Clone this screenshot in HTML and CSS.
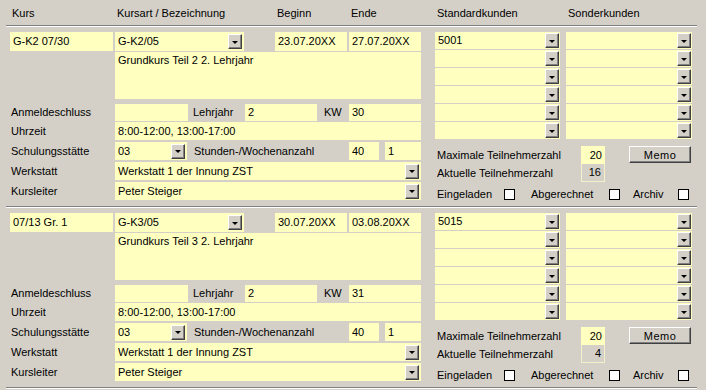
FILE: index.html
```html
<!DOCTYPE html>
<html lang="de">
<head>
    <meta charset="UTF-8">
    <title>Kursübersicht</title>
    <link rel="stylesheet" href="styles.css">
</head>
<body>
    <div class="head">
        <div class="left-cols">
            <span class="h">Kurs</span>
            <span class="h">Kursart / Bezeichnung</span>
            <span></span>
            <span class="h">Beginn</span>
            <span class="h">Ende</span>
        </div>
        <div class="right-cols">
            <span class="h">Standardkunden</span>
            <span class="h">Sonderkunden</span>
        </div>
    </div>
    <div class="sep"></div>

    <div class="block">
        <div class="left">
            <div class="left-cols top">
                <div class="field">G-K2 07/30</div>
                <div class="field combo"><span>G-K2/05</span><i class="drop"></i></div>
                <span></span>
                <div class="field">23.07.20XX</div>
                <div class="field">27.07.20XX</div>
            </div>
            <div class="line area-line">
                <span></span>
                <div class="field area">Grundkurs Teil 2 2. Lehrjahr</div>
            </div>
            <div class="line anm">
                <span class="lbl">Anmeldeschluss</span>
                <div class="sub">
                    <div class="field w73"></div>
                    <span class="cap w57">Lehrjahr</span>
                    <div class="field w72">2</div>
                    <span class="cap w32">KW</span>
                    <div class="field w72">30</div>
                </div>
            </div>
            <div class="line uhr">
                <span class="lbl">Uhrzeit</span>
                <div class="field">8:00-12:00, 13:00-17:00</div>
            </div>
            <div class="line">
                <span class="lbl">Schulungsstätte</span>
                <div class="sub">
                    <div class="field combo w72"><span>03</span><i class="drop"></i></div>
                    <span class="cap w162">Stunden-/Wochenanzahl</span>
                    <div class="field w30">40</div>
                    <span class="w6"></span>
                    <div class="field w36">1</div>
                </div>
            </div>
            <div class="line">
                <span class="lbl">Werkstatt</span>
                <div class="field combo"><span>Werkstatt 1 der Innung ZST</span><i class="drop"></i></div>
            </div>
            <div class="line">
                <span class="lbl">Kursleiter</span>
                <div class="field combo"><span>Peter Steiger</span><i class="drop"></i></div>
            </div>
        </div>
        <div class="right">
            <div class="right-cols kunden">
                <div class="field combo"><span>5001</span><i class="drop"></i></div>
                <div class="field combo"><span></span><i class="drop"></i></div>
                <div class="field combo"><span></span><i class="drop"></i></div>
                <div class="field combo"><span></span><i class="drop"></i></div>
                <div class="field combo"><span></span><i class="drop"></i></div>
                <div class="field combo"><span></span><i class="drop"></i></div>
                <div class="field combo"><span></span><i class="drop"></i></div>
                <div class="field combo"><span></span><i class="drop"></i></div>
                <div class="field combo"><span></span><i class="drop"></i></div>
                <div class="field combo"><span></span><i class="drop"></i></div>
                <div class="field combo"><span></span><i class="drop"></i></div>
                <div class="field combo"><span></span><i class="drop"></i></div>
            </div>
            <div class="stats">
                <span class="lbl">Maximale Teilnehmerzahl</span>
                <div class="field num">20</div>
                <span></span>
                <button class="memo">Memo</button>
                <span class="lbl">Aktuelle Teilnehmerzahl</span>
                <div class="num ro">16</div>
            </div>
            <div class="checks">
                <span class="ck w69">Eingeladen</span><i class="box"></i>
                <span class="ck w78 m16">Abgerechnet</span><i class="box"></i>
                <span class="ck w45 m13">Archiv</span><i class="box"></i>
            </div>
        </div>
    </div>
    <div class="sep"></div>

    <div class="block">
        <div class="left">
            <div class="left-cols top">
                <div class="field">07/13 Gr. 1</div>
                <div class="field combo"><span>G-K3/05</span><i class="drop"></i></div>
                <span></span>
                <div class="field">30.07.20XX</div>
                <div class="field">03.08.20XX</div>
            </div>
            <div class="line area-line">
                <span></span>
                <div class="field area">Grundkurs Teil 3 2. Lehrjahr</div>
            </div>
            <div class="line anm">
                <span class="lbl">Anmeldeschluss</span>
                <div class="sub">
                    <div class="field w73"></div>
                    <span class="cap w57">Lehrjahr</span>
                    <div class="field w72">2</div>
                    <span class="cap w32">KW</span>
                    <div class="field w72">31</div>
                </div>
            </div>
            <div class="line uhr">
                <span class="lbl">Uhrzeit</span>
                <div class="field">8:00-12:00, 13:00-17:00</div>
            </div>
            <div class="line">
                <span class="lbl">Schulungsstätte</span>
                <div class="sub">
                    <div class="field combo w72"><span>03</span><i class="drop"></i></div>
                    <span class="cap w162">Stunden-/Wochenanzahl</span>
                    <div class="field w30">40</div>
                    <span class="w6"></span>
                    <div class="field w36">1</div>
                </div>
            </div>
            <div class="line">
                <span class="lbl">Werkstatt</span>
                <div class="field combo"><span>Werkstatt 1 der Innung ZST</span><i class="drop"></i></div>
            </div>
            <div class="line">
                <span class="lbl">Kursleiter</span>
                <div class="field combo"><span>Peter Steiger</span><i class="drop"></i></div>
            </div>
        </div>
        <div class="right">
            <div class="right-cols kunden">
                <div class="field combo"><span>5015</span><i class="drop"></i></div>
                <div class="field combo"><span></span><i class="drop"></i></div>
                <div class="field combo"><span></span><i class="drop"></i></div>
                <div class="field combo"><span></span><i class="drop"></i></div>
                <div class="field combo"><span></span><i class="drop"></i></div>
                <div class="field combo"><span></span><i class="drop"></i></div>
                <div class="field combo"><span></span><i class="drop"></i></div>
                <div class="field combo"><span></span><i class="drop"></i></div>
                <div class="field combo"><span></span><i class="drop"></i></div>
                <div class="field combo"><span></span><i class="drop"></i></div>
                <div class="field combo"><span></span><i class="drop"></i></div>
                <div class="field combo"><span></span><i class="drop"></i></div>
            </div>
            <div class="stats">
                <span class="lbl">Maximale Teilnehmerzahl</span>
                <div class="field num">20</div>
                <span></span>
                <button class="memo">Memo</button>
                <span class="lbl">Aktuelle Teilnehmerzahl</span>
                <div class="num ro">4</div>
            </div>
            <div class="checks">
                <span class="ck w69">Eingeladen</span><i class="box"></i>
                <span class="ck w78 m16">Abgerechnet</span><i class="box"></i>
                <span class="ck w45 m13">Archiv</span><i class="box"></i>
            </div>
        </div>
    </div>
    <div class="sep"></div>
</body>
</html>
```

FILE: styles.css
```css
body {
    margin: 0;
    width: 706px;
    height: 390px;
    overflow: hidden;
    background: #d4d0c8;
    font-family: "Liberation Sans", Arial, sans-serif;
    font-size: 11px;
    color: #000;
}
.head {
    display: flex;
    height: 25px;
    align-items: center;
    padding-left: 10px;
}
.h {
    padding-left: 2px;
    white-space: nowrap;
}
.left-cols {
    display: grid;
    grid-template-columns: 103px 129px 27px 72px 72px;
    column-gap: 2px;
    width: 411px;
}
.right-cols {
    display: grid;
    grid-template-columns: 125px 126px;
    column-gap: 6px;
    margin-left: 14px;
}
.sep {
    margin-left: 6px;
    width: 691px;
    border-top: 1px solid #808080;
    border-bottom: 1px solid #fff;
}
.block {
    display: flex;
    align-items: flex-start;
    height: 168px;
    padding: 5px 0 6px 10px;
}
.left {
    width: 411px;
}
.right {
    margin-left: 14px;
    width: 257px;
}
.field {
    background: #ffffc0;
    padding-left: 3px;
    box-sizing: border-box;
    white-space: nowrap;
    overflow: hidden;
}
.top {
    height: 19px;
    line-height: 19px;
}
.line {
    display: grid;
    grid-template-columns: 103px 306px;
    column-gap: 2px;
    height: 18px;
    line-height: 18px;
    margin-top: 2px;
}
.area-line {
    height: 47px;
    margin-top: 1px;
}
.area {
    line-height: 13px;
    padding-top: 2px;
}
.anm {
    height: 17px;
    line-height: 17px;
    margin-top: 5px;
}
.uhr {
    margin-top: 1px;
}
.lbl {
    padding-left: 1px;
    white-space: nowrap;
}
.sub {
    display: flex;
}
.cap {
    white-space: nowrap;
    box-sizing: border-box;
}
.w73 { width: 73px; }
.w72 { width: 72px; }
.w57 { width: 57px; padding-left: 5px; }
.w32 { width: 32px; padding-left: 7px; }
.w162 { width: 162px; padding-left: 7px; }
.w30 { width: 30px; }
.w6 { width: 6px; }
.w36 { width: 36px; }
.combo {
    display: flex;
    align-items: center;
}
.combo span {
    flex: 1;
    overflow: hidden;
}
.drop {
    display: flex;
    align-items: center;
    justify-content: center;
    flex: none;
    width: 14px;
    height: 15px;
    margin-right: 2px;
    box-sizing: border-box;
    background: #d4d0c8;
    border: 1px solid;
    border-color: #fff #404040 #404040 #fff;
    box-shadow: inset -1px -1px #808080;
}
.drop::after {
    content: "";
    border-left: 3px solid transparent;
    border-right: 3px solid transparent;
    border-top: 3px solid #000;
    margin-top: 1px;
}
.kunden {
    margin-left: 0;
    grid-auto-flow: column;
    grid-template-rows: repeat(6, 17px);
    row-gap: 1px;
    line-height: 17px;
}
.kunden .drop {
    margin-right: 1px;
}
.stats {
    display: grid;
    grid-template-columns: 146px 24px 24px 62px;
    grid-template-rows: 18px 18px;
    line-height: 18px;
    margin-top: 7px;
}
.stats .lbl {
    padding-left: 2px;
}
.num {
    text-align: right;
    padding-right: 3px;
    box-sizing: border-box;
}
.ro {
    border: 1px solid #f4f0c8;
    border-top: none;
    line-height: 17px;
}
.memo {
    height: 17px;
    padding: 0;
    margin: 0;
    font-family: inherit;
    font-size: 11px;
    letter-spacing: 0.5px;
    color: #000;
    background: #d4d0c8;
    border: 1px solid;
    border-color: #fff #404040 #404040 #fff;
    box-shadow: inset -1px -1px #808080;
}
.checks {
    display: flex;
    align-items: center;
    height: 16px;
    margin-top: 4px;
}
.ck {
    box-sizing: border-box;
    white-space: nowrap;
}
.w69 { width: 69px; padding-left: 2px; }
.w78 { width: 78px; }
.w45 { width: 45px; }
.m16 { margin-left: 16px; }
.m13 { margin-left: 13px; }
.box {
    width: 11px;
    height: 11px;
    box-sizing: border-box;
    border: 1px solid #000;
    background: #fff;
}
```
